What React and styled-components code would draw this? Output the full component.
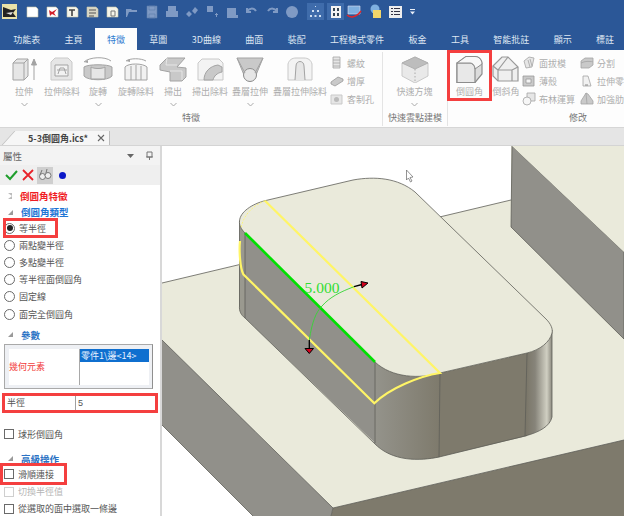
import React from 'react';
import styled, { createGlobalStyle } from 'styled-components';

const GlobalStyle = createGlobalStyle`
  html, body { margin: 0; padding: 0; background: #fff; }
  body { font-family: "Noto Sans CJK TC", "Liberation Sans", sans-serif; }
  * { box-sizing: border-box; }
`;

const MARK = '#f43f3f';

const Page = styled.div`
  width: 624px;
  height: 516px;
  display: flex;
  flex-direction: column;
  overflow: hidden;
  font-size: 9px;
  color: #444;
`;

const QuickBar = styled.div`
  height: 28px;
  flex: none;
  background: #2b5797;
  display: flex;
  align-items: flex-start;
  padding: 3px 0 0 1px;
`;

const QuickSlot = styled.div`
  flex: none;
  width: ${props => props.$w || 20}px;
  height: 17px;
  display: flex;
  align-items: center;
  justify-content: center;
  background: ${props => (props.$on ? '#3f6cab' : 'transparent')};
`;

const TabBar = styled.div`
  height: 22px;
  flex: none;
  background: #2b5797;
  display: flex;
  align-items: stretch;
  padding-left: 1px;
  white-space: nowrap;
`;

const Tab = styled.div`
  flex: none;
  padding: 0 12.2px;
  display: flex;
  align-items: center;
  color: ${props => (props.$active ? '#2f7bd0' : '#dfe7f3')};
  background: ${props => (props.$active ? '#fdfdfd' : 'transparent')};
`;

const Ribbon = styled.div`
  height: 78px;
  flex: none;
  background: #fdfdfd;
  border-bottom: 1px solid #d6d6d6;
  display: flex;
`;

const Group = styled.div`
  flex: none;
  width: ${props => props.$w}px;
  display: flex;
  flex-direction: column;
  border-right: ${props => (props.$end ? 'none' : '1.5px solid #e4e4e4')};
  margin: 2px 0 1px;
`;

const GroupBody = styled.div`
  flex: 1;
  display: flex;
  padding-left: ${props => props.$pad || 0}px;
`;

const GroupName = styled.div`
  height: 19px;
  text-align: center;
  color: #777;
  line-height: 21px;
`;

const Big = styled.div`
  flex: none;
  width: ${props => props.$w}px;
  height: ${props => (props.$mark ? 51 : 49)}px;
  margin-top: ${props => (props.$mark ? -2 : -1)}px;
  margin-left: ${props => (props.$mark ? -1 : 0)}px;
  display: flex;
  flex-direction: column;
  align-items: center;
  padding-top: ${props => (props.$mark ? 6 : 5)}px;
  color: #adadad;
  white-space: nowrap;
  outline: ${props => (props.$mark ? `3px solid ${MARK}` : 'none')};
  outline-offset: -3px;
  svg { flex: none; }
`;

const BigLabel = styled.div`
  height: 12px;
  line-height: 12px;
  margin-top: 3px;
`;

const Chevron = styled.svg`
  width: 7px;
  height: 5px;
  margin-top: 4px;
`;

const SmallCol = styled.div`
  flex: none;
  width: ${props => props.$w}px;
  padding-top: 3px;
  padding-left: ${props => props.$pad || 0}px;
  display: flex;
  flex-direction: column;
  gap: 2px;
`;

const Small = styled.div`
  height: 16px;
  display: flex;
  align-items: center;
  gap: 3px;
  color: #adadad;
  white-space: nowrap;
`;

const DocStrip = styled.div`
  height: 18px;
  flex: none;
  background: #e5e5e5;
  border-bottom: 1px solid #d4d4d4;
  padding: 3px 0 0 14px;
  display: flex;
`;

const DocTab = styled.div`
  position: relative;
  width: 96px;
  display: flex;
  align-items: center;
  justify-content: space-between;
  padding: 0 4px 0 14px;
  background: #f6f6f6;
  border-right: 1px solid #bdbdbd;
  color: #444;
  font-weight: 700;
  &::before {
    content: '';
    position: absolute;
    left: -6px;
    top: 0;
    bottom: 0;
    width: 14px;
    background: #f6f6f6;
    border-left: 1px solid #bdbdbd;
    transform: skewX(-42deg);
  }
  span { position: relative; }
`;

const Main = styled.div`
  flex: 1;
  min-height: 0;
  display: flex;
`;

const Panel = styled.div`
  width: 160px;
  flex: none;
  background: #fff;
  display: flex;
  flex-direction: column;
  overflow: hidden;
  white-space: nowrap;
`;

const Splitter = styled.div`
  width: 2px;
  flex: none;
  background: #d8d8d8;
`;

const PanelHead = styled.div`
  height: 19px;
  flex: none;
  background: #f3f3f3;
  display: flex;
  align-items: center;
  justify-content: space-between;
  padding: 0 3px 0 3px;
  color: #666;
  font-size: 9.5px;
`;

const PanelTools = styled.div`
  height: 20px;
  flex: none;
  background: #efefef;
  display: flex;
  align-items: center;
  padding-left: 3px;
  gap: 1px;
`;

const ToolButton = styled.div`
  width: 16px;
  height: 17px;
  display: flex;
  align-items: center;
  justify-content: center;
  background: ${props => (props.$on ? '#cfcfcf' : 'transparent')};
`;

const TreeRow = styled.div`
  height: ${props => props.$h || 18}px;
  margin-top: ${props => props.$top || 0}px;
  flex: none;
  display: flex;
  align-items: center;
  padding-left: 8px;
  gap: 8px;
  font-weight: 700;
  font-size: 9.5px;
  color: ${props => props.$color};
`;

const Twist = styled.span`
  width: 0;
  height: 0;
  flex: none;
  ${props => (props.$open
    ? 'border-bottom: 5px solid #9a9a9a; border-left: 5px solid transparent;'
    : 'border-left: 4px solid #fff; border-top: 3.5px solid #bbb; border-bottom: 3.5px solid #bbb;')}
`;

const OptionRow = styled.div`
  height: 17.2px;
  margin-top: ${props => props.$top || 0}px;
  flex: none;
  display: flex;
  align-items: center;
  padding-left: 4px;
  gap: 4px;
  color: ${props => (props.$off ? '#b5b5b5' : '#555')};
`;

// same row, with the red annotation frame of the tutorial around it
const MarkedRow = styled(OptionRow)`
  width: ${props => props.$w}px;
  height: ${props => props.$h}px;
  margin: ${props => -(props.$h - 17.2) / 2}px 0 ${props => -(props.$h - 17.2) / 2}px ${props => props.$x}px;
  padding-left: ${props => 4 - props.$x}px;
  outline: 3px solid ${MARK};
  outline-offset: -3px;
`;

const Radio = styled.span`
  width: 11px;
  height: 11px;
  flex: none;
  border-radius: 50%;
  border: 1px solid #6a6a6a;
  background: #fff;
  display: flex;
  align-items: center;
  justify-content: center;
  &::after {
    content: '';
    display: ${props => (props.$on ? 'block' : 'none')};
    width: 6px;
    height: 6px;
    border-radius: 50%;
    background: #222;
  }
`;

const Check = styled.span`
  width: 10px;
  height: 10px;
  flex: none;
  border: 1px solid ${props => (props.$off ? '#cfcfcf' : '#6a6a6a')};
  background: #fff;
`;

const ParamBox = styled.div`
  height: 45px;
  margin: 1px 7px 0 4px;
  flex: none;
  border: 1px solid #a9a9a9;
  border-right-color: #8f8f8f;
  background: #eef0f4;
  padding: 4px 3px 3px 4px;
  display: grid;
  grid-template-columns: 71px 1fr;
`;

const ParamName = styled.div`
  background: #fff;
  color: #f23c3c;
  display: flex;
  align-items: center;
  border-right: 1px solid #a8a8a8;
`;

const ParamList = styled.div`
  background: #fff;
`;

const ParamItem = styled.div`
  height: 13px;
  line-height: 13px;
  background: #0f6fcf;
  color: #e8f2ff;
  padding-left: 1px;
`;

const RadiusRow = styled.div`
  height: 18px;
  margin: 5px 3px 0 3px;
  flex: none;
  display: grid;
  grid-template-columns: 71px 1fr;
  outline: 3px solid ${MARK};
  outline-offset: -2px;
  align-items: stretch;
  color: #555;
  padding: 2px;
`;

const RadiusCell = styled.div`
  display: flex;
  align-items: center;
  padding-left: 2px;
  border-right: ${props => (props.$line ? '1px solid #a0a0a0' : 'none')};
  font-family: "Liberation Sans", "Noto Sans CJK TC", sans-serif;
`;

const Viewport = styled.div`
  flex: 1;
  min-width: 0;
  background: #fff;
  svg { display: block; }
`;

const tabs = ['功能表', '主頁', '特徵', '草圖', '3D曲線', '曲面', '裝配', '工程模式零件', '板金', '工具', '智能批註', '顯示', '標註'];
const radios = ['兩點變半徑', '多點變半徑', '等半徑面倒圓角', '固定線', '面完全倒圓角'];

const gF = '#e6e6e6';
const gS = '#a3a3a3';
const gD = '#c9c9c9';

// ribbon drawings, all on a 34x27 grid
const bigIcons = {
  extrude: <><path d="M6 7l4-4h11v17l-4 4H6z" fill={gF} stroke={gS} /><path d="M6 7h11v17M17 7l4-4" fill="none" stroke={gS} /><path d="M27 24V6M24.500 9L27 3l2.500 6z" fill={gS} stroke={gS} /></>,
  cut: <><path d="M6 6l4-4h13l4 4v18H6z" fill={gF} stroke={gD} /><path d="M10 9h13v11H10z" fill="#f2f2f2" stroke={gS} /><path d="M13 18l2-6h4l2 6M12 14h10" fill="none" stroke={gS} /></>,
  revolve: <><path d="M3 11c4-3 24-3 28 0v9c-4 5-24 5-28 0z" fill={gD} stroke={gS} /><path d="M10 11c3 2 11 2 14 0v12h-14z" fill={gF} stroke={gS} /><path d="M3 6C8 1 24 0 30 5" fill="none" stroke={gS} /><path d="M3 6l4-2v3z" fill={gS} /></>,
  revolveCut: <><path d="M6 24V11c3-4 18-4 22 0v13z" fill="#f1f1f1" stroke={gS} /><path d="M12 10v14M22 10v14M17 9v15" fill="none" stroke={gS} /><path d="M7 5c4-3 15-3 20 0" fill="none" stroke={gS} /><path d="M7 5l4-2v3z" fill={gS} /></>,
  sweep: <><path d="M4 9l7-7h18l-8 9 9 1v9l-4 4H14v-9l-10-2z" fill={gD} stroke={gS} /><path d="M14 15h12v9M11 2l-1 7h11" fill="none" stroke={gF} /></>,
  sweepCut: <><path d="M5 7l4-4h17l4 4v17H5z" fill="#f3f3f3" stroke={gD} /><path d="M11 24c0-8 6-14 14-15l4 2v5c-5 1-8 4-9 8z" fill={gD} stroke={gS} /></>,
  loft: <><path d="M4 2h26l-7 17a6 6 0 1 1-12 0z" fill={gD} stroke={gS} /><circle cx="17" cy="19" r="6.500" fill={gF} stroke="#8d8d8d" /><path d="M4 2l8 15M30 2l-8 15" stroke={gS} fill="none" /></>,
  loftCut: <><path d="M5 24V8c1-4 4-6 8-6h8c4 0 7 2 8 6v16z" fill="#f3f3f3" stroke={gD} /><path d="M12 24l1-14c0-6 8-6 8 0l1 14" fill={gF} stroke={gS} /></>,
  block: <><path d="M4 7l13-6 13 6v13l-13 7-13-7z" fill="#e9e9e9" stroke={gD} /><path d="M4 7l13 6 13-6-13-6z" fill="#bdbdbd" stroke="#b0b0b0" /><path d="M17 13v14" stroke="#aaa" strokeDasharray="1.500 2" fill="none" /></>,
  fillet: <><path d="M4 26.500V7l9-6.500h9c4 0 7 3.500 7 7.500v10l-7 8.500z" fill="#dcdcdc" stroke="#8d8d8d" strokeWidth="1.200" /><path d="M4 7h13c3 0 5 3 5 6v13.500H4z" fill="#e8e8e8" stroke="#8d8d8d" strokeWidth="1.200" /><path d="M13 .500h9c4 0 7 3.500 7 7.500l-7 5c0-3-2-6-5-6H4z" fill="#f8f8f8" stroke="#8d8d8d" strokeWidth="1" /></>,
  chamfer: <><path d="M4 10l9-9h6l10 10v14H9l-5-5z" fill="#efefef" stroke="#999" strokeWidth="1.200" /><path d="M9 14v11M9 14h14l6-3M23 14v11M9 14L19 1M4 10l5 4" fill="none" stroke="#999" strokeWidth="1.200" /></>,
};

const smallIcons = {
  thread: <path d="M3 1h7v11H3zM3 4h7M3 7h7M3 10h7" fill={gF} stroke={gS} strokeWidth=".8" />,
  thick: <path d="M1 8l7-5 5 2v2l-8 5-4-2z" fill={gD} stroke="#999" strokeWidth=".8" />,
  hole: <><path d="M1 3h11v9H1z" fill={gF} stroke={gD} /><circle cx="6.500" cy="7.500" r="2.500" fill="#bbb" /></>,
  draft: <path d="M2 5l5-4 5 1-2 9-6 1zM6 4l2 7M8 3l2 7" fill={gF} stroke={gS} strokeWidth=".8" />,
  shell: <><path d="M1 2h11v10H1z" fill={gD} stroke="#999" strokeWidth=".8" /><path d="M4 5h5v4H4z" fill="#f4f4f4" stroke="#999" strokeWidth=".8" /></>,
  bool: <><path d="M5 1h8v8H5z" fill={gF} stroke={gS} strokeWidth=".8" /><circle cx="5" cy="9" r="4" fill="#f6f6f6" stroke={gS} strokeWidth=".8" /></>,
  split: <path d="M1 5l4-3h8v7l-4 3H1zM1 7c4-2 8-2 12-1" fill={gD} stroke={gS} strokeWidth=".8" />,
  stretch: <><path d="M3 12V2h5l3 10z" fill="#f1f1f1" stroke={gS} strokeWidth=".8" /><path d="M5 11h3" stroke="#888" /></>,
  rib: <path d="M1 12V9l5-8 2 1 5 7v3zM6 1l1 11" fill={gD} stroke={gS} strokeWidth=".8" />,
};

const BigTool = ({ w, icon, label, chevron, mark }) => (
  <Big $w={w} $mark={mark}>
    <svg width="34" height="27" viewBox="0 0 34 27">{bigIcons[icon]}</svg>
    <BigLabel>{label}</BigLabel>
    {chevron && (
      <Chevron viewBox="0 0 7 5"><path d="M.500 1l3 3 3-3" fill="none" stroke="#aaa" /></Chevron>
    )}
  </Big>
);

const SmallTool = ({ icon, label }) => (
  <Small>
    <svg width="14" height="14" viewBox="0 0 14 14">{smallIcons[icon]}</svg>
    {label}
  </Small>
);

const paper = (inner, fill = '#f6f5ea') => (
  <svg width="13" height="14" viewBox="0 0 13 14">
    <path d="M1 2h9l2 2v8H1z" fill={fill} stroke="#c9c6aa" strokeWidth=".6" />
    {inner}
  </svg>
);

const dim = inner => (
  <svg width="14" height="14" viewBox="0 0 14 14" fill="#7f9ac4" stroke="none">{inner}</svg>
);

const quickIcons = [
  { w: 17, node: <svg width="15" height="15" viewBox="0 0 15 15"><path d="M0 0h15v15H0z" fill="#e9e2a8" /><path d="M1 3l8 3 5-1-3 4 3 4H1z" fill="#222" /><path d="M4 9l7-1-2 3z" fill="#ddd" /></svg> },
  { w: 4 },
  { node: paper(null, '#fff') },
  { node: paper(<path d="M3 5l3 2 5-3-3 4 2 3-4-2-2 2z" fill="#d3202a" />, '#fff') },
  { node: paper(<path d="M3 5h6M6 5v6" stroke="#444" strokeWidth="1.600" fill="none" />) },
  { node: paper(<path d="M3 5h7M3 8h7M3 11h5" stroke="#555" strokeWidth="1.200" fill="none" />, '#d9d7c6') },
  { node: paper(<path d="M5 6h4v5H5z" fill="none" stroke="#777" />) },
  { node: dim(<path d="M1 4h5l1 1h5v2H4l-2 5H1z" />) },
  { node: dim(<path d="M2 1h10v12H2zM4 9h6v4H4zM4 1h6v4H4z" stroke="#5c7cac" strokeWidth=".6" />) },
  { node: dim(<path d="M3 1h8v5h2v6H1V6h2zM4 8h6v2H4z" />) },
  { node: dim(<path d="M1 9l3-3 3 3-3 3zM7 6l3-4 3 3-3 4z" />) },
  { node: dim(<path d="M2 1h6v6H2zM10 9h3v1h-3zM11 8h1v4h-1z" />) },
  { node: dim(<path d="M2 3h9v7h2v3H2zM5 5h3v3H5z" />) },
  { node: dim(<path d="M2 7a5 5 0 0 1 9-1M2 3v4h4" fill="none" stroke="#7f9ac4" strokeWidth="2" />) },
  { node: dim(<path d="M12 7a5 5 0 0 0-9-1M12 3v4H8" fill="none" stroke="#7f9ac4" strokeWidth="2" />) },
  { node: dim(<circle cx="7" cy="7" r="6" />) },
  { w: 5 },
  { w: 17, on: true, node: <svg width="13" height="13" viewBox="0 0 13 13" fill="#cfe0f4"><path d="M6 1h1v1H6zM3 5h2v2H3zM8 5h2v2H8zM1 10h2v2H1zM5.500 10h2v2h-2zM10 10h2v2h-2z" /></svg> },
  { w: 3 },
  { w: 17, on: true, node: <svg width="12" height="14" viewBox="0 0 12 14"><path d="M1 1h10v12H1z" fill="#f3f3f3" /><path d="M3 3h2v3H3zM7 3h2v3H7zM3 8h2v3H3zM7 8h2v3H7z" fill="#345" /></svg> },
  { w: 20, node: <svg width="16" height="14" viewBox="0 0 16 14"><path d="M2 1h12v8H2z" fill="#7fb0e0" stroke="#dde" strokeWidth=".6" /><path d="M1 10c3 3 9 3 14-4" fill="none" stroke="#e0262a" strokeWidth="1.500" /></svg> },
  { w: 22, node: <svg width="12" height="15" viewBox="0 0 12 15"><circle cx="6" cy="5" r="4.500" fill="#7fb0e0" /><path d="M4 6h8v8H4z" fill="#f2d66a" /></svg> },
  { w: 18, node: <svg width="13" height="12" viewBox="0 0 13 12"><path d="M0 0h13v12H0z" fill="#eee" /><path d="M2 2h2v1H2zM5 2h6v1H5zM2 5h2v1H2zM5 5h6v1H5zM2 8h2v1H2zM5 8h6v1H5z" fill="#334" /></svg> },
  { w: 16, node: <svg width="7" height="7" viewBox="0 0 7 7" fill="#e8eef8"><path d="M1 1h5v1H1zM1 3.500h5L3.500 6.500z" /></svg> },
];

const faceFront = '#7e7a6c';
const faceSide = '#91908a';
const faceTop = '#eaeadb';
const edge = '#5e5e58';
const preview = '#fff566';

/** The 3D model, drawn in page coordinates */
const Model = () => (
  <svg width="462" height="370" viewBox="162 146 462 370">
    <defs>
      <linearGradient id="frontRound" x1="375" x2="440" y1="0" y2="0" gradientUnits="userSpaceOnUse">
        <stop offset="0" stopColor="#94938b" />
        <stop offset="1" stopColor="#7e7a6c" />
      </linearGradient>
      <linearGradient id="rightRound" x1="526" x2="552" y1="0" y2="0" gradientUnits="userSpaceOnUse">
        <stop offset="0" stopColor="#7a7668" />
        <stop offset=".35" stopColor="#87847a" />
        <stop offset=".8" stopColor="#d0cfc2" />
        <stop offset="1" stopColor="#8b897e" />
      </linearGradient>
    </defs>

    {/* base plate */}
    <path d="M162 283L511 200V146H624V440L333 508 162 340z" fill={faceTop} />
    <path d="M162 283L511 200" stroke={edge} strokeWidth=".8" fill="none" />
    <path d="M162 340L333 508 331 516H253L162 425z" fill={faceSide} />
    <path d="M333 508L624 440V516H331z" fill={faceFront} />
    <path d="M162 340L333 508 624 440M162 425L253 516M333 508L331 516" stroke={edge} strokeWidth=".8" fill="none" />

    {/* back wall */}
    <path d="M512 146L624 252V339L511 227z" fill={faceSide} stroke={edge} strokeWidth=".8" />
    <path d="M512 146H624V252z" fill={faceTop} />

    {/* boss side faces */}
    <path d="M239.500 221L245 233 245 318C241 315 239 311 239 306z" fill="#9a998f" />
    <path d="M245 233L375 362V443L245 318z" fill={faceSide} />
    <path d="M375 362C392 378 420 379 440 373V457C420 461 392 462 374 443z" fill="url(#frontRound)" />
    <path d="M440 373L527 353V436L439 457z" fill={faceFront} />
    <path d="M527 353C540 350 550 342 552 333V417C550 426 540 432 525 436z" fill="url(#rightRound)" />
    <path d="M239.500 221V306C239 311 241 315 245 318L374 443C392 462 420 461 439 457L525 436C540 432 550 426 552 417V330M245 233V318M375 362V443M440 373L439 457M527 353L525 436" stroke={edge} strokeWidth=".8" fill="none" />

    {/* boss top face */}
    <path d="M245 233C241 229 239 225 239.500 221C240 212 252 204 265 200.700L353 180C375 176 398 178 415 192L546 319C551 324 553 329 552 333C550 342 540 350 527 353L440 373C420 379 392 378 375 362z" fill={faceTop} stroke={edge} strokeWidth=".8" />

    {/* fillet preview */}
    <path d="M265 200.700L440 373C420 376 390 388 374.300 403.300L243.300 274.300C240 268 239 250 240 241" fill="none" stroke={preview} strokeWidth="2.200" />
    <path d="M265 200.700C252 206 243 216 241 228" fill="none" stroke={preview} strokeWidth=".8" strokeDasharray="2 1.500" />
    <path d="M245 233L375 362" stroke="#00e000" strokeWidth="2.600" fill="none" />

    {/* radius dimension */}
    <path d="M309.300 340C312 322 316 312 322 306C330 297 340 292 354 286.700" fill="none" stroke="#35d535" strokeWidth=".9" />
    <path d="M354 286.700L362 284.500M309.300 340V348" stroke="#000" strokeWidth="1.300" fill="none" />
    <path d="M361 281.500L368 283 362 288z" fill="#d4001c" stroke="#000" strokeWidth="1" />
    <path d="M305 348.500H313.500L309.300 353.500z" fill="#d4001c" stroke="#000" strokeWidth="1" />
    <text x="304.500" y="292.500" fontFamily="'Liberation Serif', serif" fontSize="15.500" fill="#33dd33">5.000</text>

    {/* mouse cursor */}
    <path d="M406.500 170V180L408.500 178 410.500 182 412 181 410 177.500 413 177z" fill="#fff" stroke="#666" strokeWidth=".7" />
  </svg>
);

export default function App() {
  return (
    <Page>
      <GlobalStyle />
      <QuickBar>
        {quickIcons.map((q, i) => (
          <QuickSlot key={i} $w={q.w} $on={q.on}>{q.node}</QuickSlot>
        ))}
      </QuickBar>
      <TabBar>
        {tabs.map(t => <Tab key={t} $active={t === '特徵'}>{t}</Tab>)}
      </TabBar>
      <Ribbon>
        <Group $w={383}>
          <GroupBody $pad={4}>
            <BigTool w={40} icon="extrude" label="拉伸" chevron />
            <BigTool w={36} icon="cut" label="拉伸除料" />
            <BigTool w={36} icon="revolve" label="旋轉" chevron />
            <BigTool w={40} icon="revolveCut" label="旋轉除料" />
            <BigTool w={34} icon="sweep" label="掃出" chevron />
            <BigTool w={40} icon="sweepCut" label="掃出除料" />
            <BigTool w={40} icon="loft" label="疊層拉伸" chevron />
            <BigTool w={60} icon="loftCut" label="疊層拉伸除料" />
            <SmallCol $w={50}>
              <SmallTool icon="thread" label="螺紋" />
              <SmallTool icon="thick" label="增厚" />
              <SmallTool icon="hole" label="客制孔" />
            </SmallCol>
          </GroupBody>
          <GroupName>特徵</GroupName>
        </Group>
        <Group $w={65}>
          <GroupBody>
            <BigTool w={63} icon="block" label="快速方塊" chevron />
          </GroupBody>
          <GroupName>快速雲點建模</GroupName>
        </Group>
        <Group $w={260} $end>
          <GroupBody>
            <BigTool w={45} icon="fillet" label="倒圓角" mark />
            <BigTool w={28} icon="chamfer" label="倒斜角" />
            <SmallCol $w={57} $pad={2}>
              <SmallTool icon="draft" label="面拔模" />
              <SmallTool icon="shell" label="薄殼" />
              <SmallTool icon="bool" label="布林運算" />
            </SmallCol>
            <SmallCol $w={60} $pad={3}>
              <SmallTool icon="split" label="分割" />
              <SmallTool icon="stretch" label="拉伸零" />
              <SmallTool icon="rib" label="加強肋" />
            </SmallCol>
          </GroupBody>
          <GroupName>修改</GroupName>
        </Group>
      </Ribbon>
      <DocStrip>
        <DocTab>
          <span>5-3倒圓角.ics*</span>
          <svg width="8" height="8" viewBox="0 0 8 8" style={{ position: 'relative' }}>
            <path d="M1 1l6 6M7 1l-6 6" stroke="#666" strokeWidth="1.100" />
          </svg>
        </DocTab>
      </DocStrip>
      <Main>
        <Panel>
          <PanelHead>
            屬性
            <svg width="30" height="10" viewBox="0 0 30 10">
              <path d="M0 3h7L3.500 7z" fill="#666" />
              <path d="M20 1h5v5h-5zM22.500 6v3M19 6h7" fill="none" stroke="#777" />
            </svg>
          </PanelHead>
          <PanelTools>
            <ToolButton>
              <svg width="13" height="12" viewBox="0 0 13 12"><path d="M1 6l4 4 7-8" fill="none" stroke="#1f9e2c" strokeWidth="2" /></svg>
            </ToolButton>
            <ToolButton>
              <svg width="12" height="12" viewBox="0 0 12 12"><path d="M1 1l10 10M11 1L1 11" fill="none" stroke="#e8222a" strokeWidth="1.800" /></svg>
            </ToolButton>
            <ToolButton $on>
              <svg width="14" height="14" viewBox="0 0 14 14"><circle cx="4.500" cy="8.500" r="3" fill="#eee" stroke="#777" /><circle cx="10" cy="7.500" r="3" fill="#eee" stroke="#777" /><path d="M2 7l2-5M8 5l1-4" stroke="#777" fill="none" /></svg>
            </ToolButton>
            <ToolButton>
              <svg width="9" height="9" viewBox="0 0 9 9"><circle cx="4.500" cy="4.500" r="3.500" fill="#0b18c8" /></svg>
            </ToolButton>
          </PanelTools>
          <TreeRow $top={2} $color="#f01c24"><Twist />倒圓角特徵</TreeRow>
          <TreeRow $h={14.500} $color="#1c74d4"><Twist $open />倒圓角類型</TreeRow>
          <MarkedRow $x={3} $w={55} $h={20}><Radio $on />等半徑</MarkedRow>
          {radios.map(r => <OptionRow key={r}><Radio />{r}</OptionRow>)}
          <TreeRow $top={4} $h={16} $color="#2a72c4"><Twist $open />參數</TreeRow>
          <ParamBox>
            <ParamName>幾何元素</ParamName>
            <ParamList><ParamItem>零件1\邊&lt;14&gt;</ParamItem></ParamList>
          </ParamBox>
          <RadiusRow>
            <RadiusCell $line>半徑</RadiusCell>
            <RadiusCell>5</RadiusCell>
          </RadiusRow>
          <OptionRow $top={14}><Check />球形倒圓角</OptionRow>
          <TreeRow $top={9} $h={14} $color="#2a72c4"><Twist $open />高級操作</TreeRow>
          <MarkedRow $x={0} $w={67} $h={22}><Check />滑順連接</MarkedRow>
          <OptionRow $off><Check $off />切換半徑值</OptionRow>
          <OptionRow><Check />從選取的面中選取一條邊</OptionRow>
        </Panel>
        <Splitter />
        <Viewport><Model /></Viewport>
      </Main>
    </Page>
  );
}
